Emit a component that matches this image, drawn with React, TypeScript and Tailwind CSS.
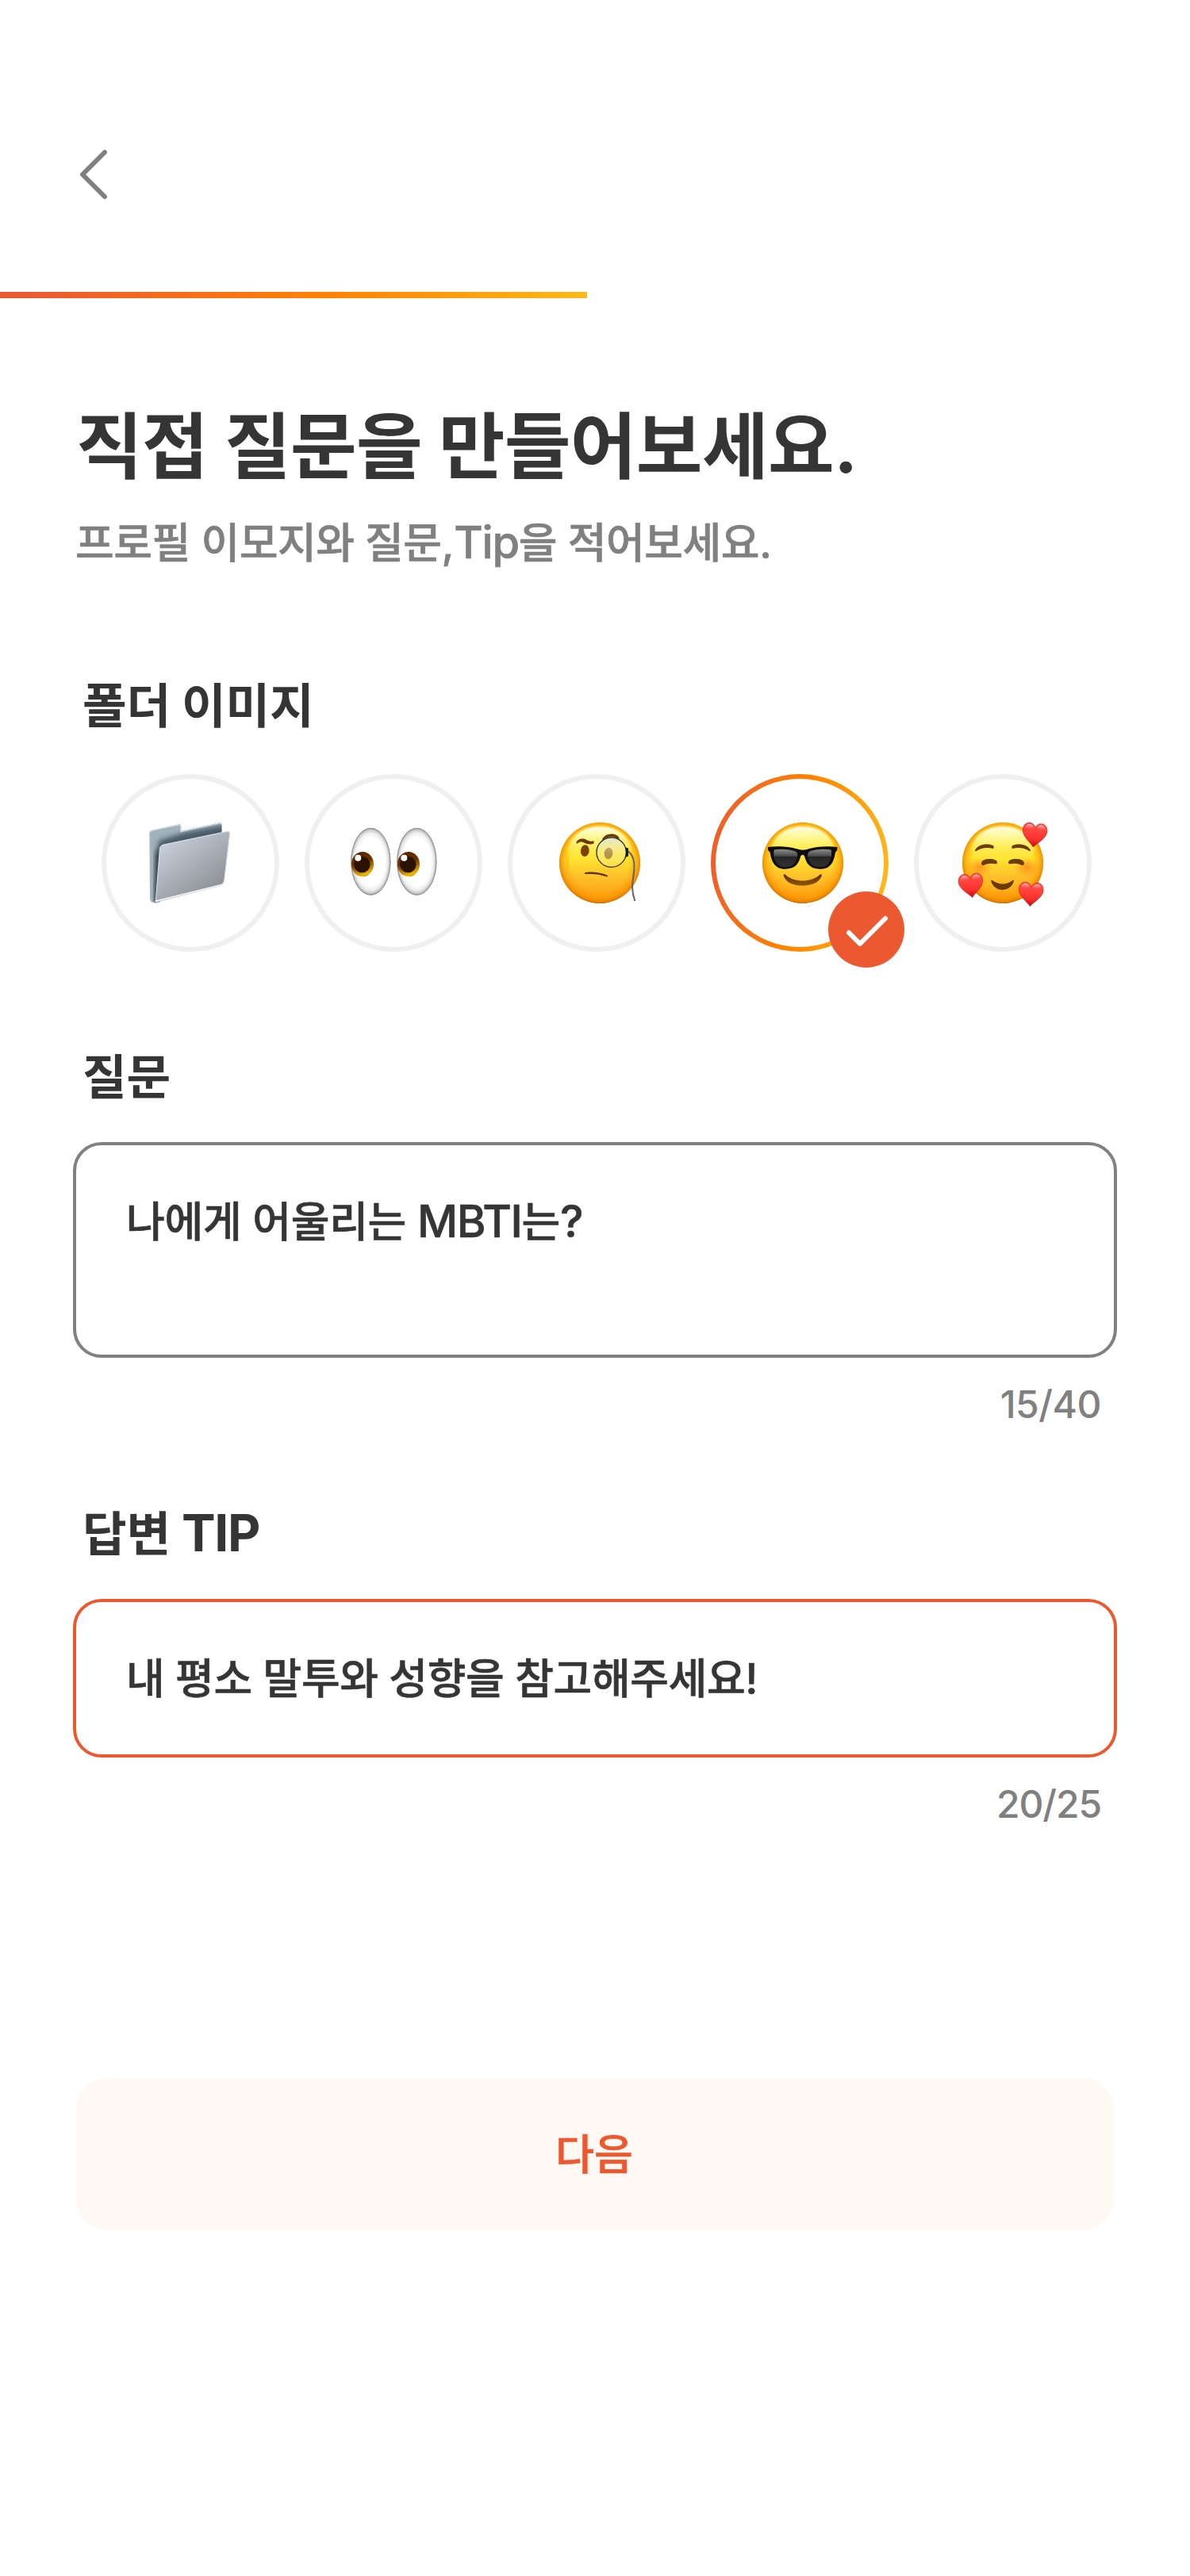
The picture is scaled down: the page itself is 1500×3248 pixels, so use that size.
import { useState, type ReactNode } from 'react';

function FolderArt() {
  return (
    <svg viewBox="84 78 672 672" className="size-full">
      <defs>
        <linearGradient id="folderFront" x1="0.05" y1="0.1" x2="0.75" y2="1">
          <stop offset="0" stopColor="#cdd5e1" />
          <stop offset="0.4" stopColor="#b0b6bf" />
          <stop offset="0.75" stopColor="#989da3" />
          <stop offset="1" stopColor="#838b91" />
        </linearGradient>
        <filter id="folderBlur" x="-30%" y="-30%" width="160%" height="160%">
          <feGaussianBlur stdDeviation="10" />
        </filter>
        <clipPath id="folderClip">
          <path d="M265 300Q265 292 275 290L377 268Q385 267 385 275V293L531 262Q539 261 539 269V400L300 563Q268 572 267 545Z" />
        </clipPath>
      </defs>
      <g clipPath="url(#folderClip)">
        <path d="M260 250H560V600H260Z" fill="#a3b1bb" />
        <path d="M300 330L400 298L560 268V420L300 600H288Z" fill="#4a5d6b" filter="url(#folderBlur)" />
        <path d="M290 380L308 345L300 560L286 566Z" fill="#16212b" filter="url(#folderBlur)" />
        <path d="M267 300V545Q268 572 300 565" fill="none" stroke="#a9bac6" strokeWidth="8" />
        <path d="M267 298Q267 292 275 290L377 269Q385 268 385 276V294L531 263Q539 262 539 269" fill="none" stroke="#c9dbe6" strokeWidth="7" />
      </g>
      <path d="M304 362Q305 348 319 345L560 294Q570 292 570 303L547 490Q546 498 537 500L288 564Z" fill="url(#folderFront)" />
      <path d="M289 560L304 362Q305 348 319 345L560 295Q569 293 569 303L547 489" fill="none" stroke="#dfe6ec" strokeWidth="3" />
      <path d="M290 559L537 497Q546 495 547 487" fill="none" stroke="#eef1f3" strokeWidth="6" strokeLinecap="round" />
    </svg>
  );
}

function Eye({ x }: { x: number }) {
  return (
    <g transform={`translate(${x} 0)`}>
      <ellipse cx="322" cy="409" rx="75" ry="127" fill="url(#eyeWhite)" />
      <ellipse cx="322" cy="409" rx="74" ry="126" fill="none" stroke="#8d8d8d" strokeWidth="2.5" />
      <ellipse cx="291" cy="419" rx="42" ry="47" fill="url(#eyeIris)" />
      <circle cx="289" cy="420" r="31" fill="#2a1300" />
      <circle cx="274" cy="395" r="12" fill="#fff" />
    </g>
  );
}

function EyesArt() {
  return (
    <svg viewBox="72 78 672 672" className="size-full">
      <defs>
        <radialGradient id="eyeWhite" cx="0.5" cy="0.5" r="0.5">
          <stop offset="0.72" stopColor="#ffffff" />
          <stop offset="0.86" stopColor="#ececec" />
          <stop offset="0.95" stopColor="#c4c4c4" />
          <stop offset="1" stopColor="#8f8f8f" />
        </radialGradient>
        <linearGradient id="eyeIris" x1="0.35" y1="0" x2="0.65" y2="1">
          <stop offset="0" stopColor="#5b2700" />
          <stop offset="0.4" stopColor="#6b3200" />
          <stop offset="0.75" stopColor="#c58800" />
          <stop offset="0.93" stopColor="#f2bd05" />
          <stop offset="1" stopColor="#9a5c00" />
        </linearGradient>
      </defs>
      <Eye x={0} />
      <Eye x={174} />
    </svg>
  );
}

function FaceBase({ id, cx }: { id: string; cx: number }) {
  return (
    <>
      <defs>
        <linearGradient id={`${id}-base`} x1="0" y1="0" x2="0" y2="1">
          <stop offset="0" stopColor="#ffdc1e" />
          <stop offset="0.45" stopColor="#ffe22e" />
          <stop offset="0.68" stopColor="#fec02a" />
          <stop offset="0.9" stopColor="#fda414" />
          <stop offset="1" stopColor="#f59a12" />
        </linearGradient>
        <radialGradient id={`${id}-edge`} cx="0.5" cy="0.48" r="0.52">
          <stop offset="0.7" stopColor="#ff9a00" stopOpacity="0" />
          <stop offset="0.87" stopColor="#fb9500" stopOpacity="0.55" />
          <stop offset="0.96" stopColor="#e98300" stopOpacity="0.9" />
          <stop offset="1" stopColor="#c96800" />
        </radialGradient>
        <linearGradient id={`${id}-glow`} x1="0" y1="0" x2="0" y2="1">
          <stop offset="0" stopColor="#fffde6" />
          <stop offset="0.3" stopColor="#fffa9e" stopOpacity="0.9" />
          <stop offset="1" stopColor="#ffee3c" stopOpacity="0" />
        </linearGradient>
        <filter id={`${id}-soft`}>
          <feGaussianBlur stdDeviation="3" />
        </filter>
      </defs>
      <circle cx={cx} cy="414" r="153" fill={`url(#${id}-base)`} />
      <circle cx={cx} cy="414" r="153" fill={`url(#${id}-edge)`} />
      <path
        d={`M${cx} 276C${cx + 60} 276 ${cx + 106} 305 ${cx + 122} 362C${cx + 116} 400 ${cx + 60} 420 ${cx} 420C${cx - 60} 420 ${cx - 116} 400 ${cx - 122} 362C${cx - 106} 305 ${cx - 60} 276 ${cx} 276Z`}
        fill={`url(#${id}-glow)`}
        filter={`url(#${id}-soft)`}
      />
    </>
  );
}

function MonocleArt() {
  return (
    <svg viewBox="60 78 672 672" className="size-full">
      <defs>
        <linearGradient id="monocleLens" x1="0" y1="0" x2="0" y2="1">
          <stop offset="0" stopColor="#dfe3d6" stopOpacity="0.85" />
          <stop offset="0.5" stopColor="#f3eda6" stopOpacity="0.5" />
          <stop offset="1" stopColor="#ffe96a" stopOpacity="0.4" />
        </linearGradient>
      </defs>
      <FaceBase id="monocle" cx={408} />
      <path d="M319 337C324 322 345 319 358 327C368 333 377 333 386 331L385 341C373 345 360 343 350 338C340 333 330 334 325 340Q318 342 319 337Z" fill="#6b3a00" />
      <path d="M417 325C425 302 470 296 482 320L478 326C465 310 440 315 428 322Q418 328 417 325Z" fill="#6b3a00" />
      <ellipse cx="352" cy="368" rx="16" ry="22" fill="#7a4300" transform="rotate(6 352 368)" />
      <ellipse cx="441" cy="378" rx="16" ry="22" fill="#7a4300" transform="rotate(6 441 378)" />
      <path d="M351 451C375 445 415 450 438 462Q438 468 432 466C410 457 378 454 355 457Q350 456 351 451Z" fill="#5e3100" />
      <circle cx="452" cy="374" r="56" fill="url(#monocleLens)" stroke="#283038" strokeWidth="4" />
      <path d="M515 370C530 380 540 405 538 440C536 475 522 505 541 558" fill="none" stroke="#5f6368" strokeWidth="6" />
      <path d="M506 357L515 359V388L507 391Q511 374 506 357Z" fill="#101418" stroke="#101418" strokeWidth="2" />
    </svg>
  );
}

function SunglassesArt() {
  return (
    <svg viewBox="48 78 672 672" className="size-full">
      <defs>
        <linearGradient id="shadeLens" x1="0" y1="0" x2="0" y2="1">
          <stop offset="0" stopColor="#8c8c8c" />
          <stop offset="0.38" stopColor="#4a4a4a" />
          <stop offset="0.42" stopColor="#262626" />
          <stop offset="1" stopColor="#303030" />
        </linearGradient>
        <linearGradient id="shadeMouth" x1="0" y1="0" x2="0" y2="1">
          <stop offset="0" stopColor="#5e2f00" />
          <stop offset="1" stopColor="#8f5600" />
        </linearGradient>
      </defs>
      <FaceBase id="shade" cx={396} />
      <path d="M264 354C300 349 345 352 373 361Q395 369 418 361C446 352 490 349 526 354V365L519 374C514 410 500 437 464 437C425 437 410 420 402 388Q395 378 388 388C380 420 366 437 328 437C291 437 277 410 272 374L264 365Z" fill="#0e0e0e" />
      <path d="M289 364C318 360 352 364 369 371C381 378 375 397 368 411C358 427 343 430 325 430C298 428 284 402 286 374Q286 367 289 364Z" fill="url(#shadeLens)" />
      <path d="M501 364C472 360 438 364 421 371C409 378 415 397 422 411C432 427 447 430 465 430C492 428 506 402 504 374Q504 367 501 364Z" fill="url(#shadeLens)" />
      <path d="M322 458Q326 454 331 460C365 489 425 489 459 460Q466 453 468 460C462 487 430 500 395 500C360 500 328 487 322 458Z" fill="url(#shadeMouth)" />
    </svg>
  );
}

function Heart({ x, y, r }: { x: number; y: number; r: number }) {
  return (
    <g transform={`translate(${x} ${y}) rotate(${r})`}>
      <path d="M0 46C-12 30 -46 10 -46 -17C-46 -34 -35 -44 -23 -44C-11 -44 -3 -36 0 -27C3 -36 11 -44 23 -44C35 -44 46 -34 46 -17C46 10 12 30 0 46Z" fill="url(#heartRed)" stroke="#d5191c" strokeWidth="2" />
      <path d="M-39 -20C-38 -34 -29 -39 -22 -39C-13 -39 -7 -33 -5 -25C-14 -19 -28 -19 -39 -20Z" fill="url(#heartShine)" />
      <path d="M39 -20C38 -34 29 -39 22 -39C13 -39 7 -33 5 -25C14 -19 28 -19 39 -20Z" fill="url(#heartShine)" />
    </g>
  );
}

function HeartsArt() {
  return (
    <svg viewBox="36 78 672 672" className="size-full">
      <defs>
        <linearGradient id="heartRed" x1="0" y1="0" x2="0" y2="1">
          <stop offset="0" stopColor="#f8544f" />
          <stop offset="0.45" stopColor="#ff3d36" />
          <stop offset="0.7" stopColor="#f52f2c" />
          <stop offset="1" stopColor="#b80d12" />
        </linearGradient>
        <linearGradient id="heartShine" x1="0" y1="0" x2="0" y2="1">
          <stop offset="0" stopColor="#ffc9c5" stopOpacity="0.95" />
          <stop offset="1" stopColor="#ff6a63" stopOpacity="0" />
        </linearGradient>
        <radialGradient id="blush">
          <stop offset="0" stopColor="#ff7a1a" stopOpacity="0.7" />
          <stop offset="1" stopColor="#ff8a1a" stopOpacity="0" />
        </radialGradient>
      </defs>
      <FaceBase id="love" cx={372} />
      <ellipse cx="284" cy="432" rx="50" ry="40" fill="url(#blush)" />
      <ellipse cx="462" cy="432" rx="50" ry="40" fill="url(#blush)" />
      <path d="M267 367C275 345 315 338 336 349Q341 357 335 360C315 354 290 357 272 369Q267 371 267 367Z" fill="#6b3c00" />
      <path d="M477 367C469 345 429 338 408 349Q403 357 409 360C429 354 454 357 472 369Q477 371 477 367Z" fill="#6b3c00" />
      <path d="M291 418C290 404 305 399 322 399C340 399 351 404 351 413Q350 420 343 418C330 414 312 416 300 423Q292 425 291 418Z" fill="#6b3c00" />
      <path d="M453 418C454 404 439 399 422 399C404 399 393 404 393 413Q394 420 401 418C414 414 432 416 444 423Q452 425 453 418Z" fill="#6b3c00" />
      <path d="M327 480Q331 477 337 483C357 497 385 497 405 483Q411 477 414 481C410 503 392 516 371 516C350 516 332 503 327 480Z" fill="#6b3a00" />
      <Heart x={492} y={308} r={6} />
      <Heart x={252} y={499} r={-6} />
      <Heart x={478} y={532} r={4} />
    </svg>
  );
}

const emojis = [
  { id: 'folder', art: <FolderArt /> },
  { id: 'eyes', art: <EyesArt /> },
  { id: 'monocle', art: <MonocleArt /> },
  { id: 'cool', art: <SunglassesArt /> },
  { id: 'love', art: <HeartsArt /> },
];

function Latin({ children }: { children: ReactNode }) {
  return <span className="text-[1.057em] leading-none tracking-[-0.022em]">{children}</span>;
}

function Label({ children }: { children: ReactNode }) {
  return <h2 className="ml-2 text-[60.5px] leading-[76px] font-bold tracking-[-0.2px]">{children}</h2>;
}

export default function App() {
  const [selected, setSelected] = useState('cool');
  return (
    <main className="min-h-[3248px] w-[1500px] bg-white font-['Inter','Noto_Sans_CJK_KR',sans-serif] text-[#353535]">
      <header className="flex h-[368px] items-start pt-[188px] pl-[100px]">
        <button aria-label="뒤로" className="h-16 w-9 text-[#808080]">
          <svg viewBox="0 0 36 64" className="size-full" fill="none" stroke="currentColor" strokeWidth="6" strokeLinecap="round" strokeLinejoin="round">
            <path d="M32 4L4 32L32 60" />
          </svg>
        </button>
      </header>
      <div className="h-2 w-[740px] bg-[linear-gradient(105deg,#ec5931_5%,#ff8400_58%,#fbb91c_100%)]" />

      <div className="px-24">
        <h1 className="mt-[131px] text-[91px] leading-[112px] font-bold tracking-[-0.7px]">직접 질문을 만들어보세요.</h1>
        <p className="-ml-px mt-[30px] text-[53px] leading-[72px] font-medium tracking-[-0.5px] text-[#808080] [-webkit-text-stroke:0.6px_currentColor]">
          프로필 이모지와 질문,<Latin>Tip</Latin>을 적어보세요.
        </p>

        <section className="mt-[131px]">
          <Label>폴더 이미지</Label>
          <div className="mt-12 flex gap-8 pl-8">
            {emojis.map((e) => (
              <button key={e.id} onClick={() => setSelected(e.id)} className="relative size-56 shrink-0">
                {selected === e.id ? (
                  <span className="absolute inset-0 rounded-full bg-[linear-gradient(100deg,#ec5931_0%,#ff8400_50%,#fbc021_100%)] p-1.5">
                    <span className="block size-full rounded-full bg-white" />
                  </span>
                ) : (
                  <span className="absolute inset-0 rounded-full border-6 border-[#efefef]" />
                )}
                <span className="relative block size-full">{e.art}</span>
                {selected === e.id && (
                  <span className="absolute -right-5 -bottom-5 size-24 rounded-full bg-[#ec5931]">
                    <svg viewBox="0 0 96 96" fill="none" stroke="#fff" strokeWidth="6" strokeLinecap="round" strokeLinejoin="round">
                      <path d="M26 52L40 66L72 34" />
                    </svg>
                  </span>
                )}
              </button>
            ))}
          </div>
        </section>

        <section className="mt-[120px]">
          <Label>질문</Label>
          <div className="-mx-1 mt-11 h-[272px] rounded-[36px] border-4 border-[#808080] px-[63px] pt-[61px]">
            <p className="text-[53px] leading-[72px] font-medium tracking-[-0.3px] [-webkit-text-stroke:0.6px_currentColor]">
              나에게 어울리는 <Latin>MBTI</Latin>는<Latin>?</Latin>
            </p>
          </div>
          <p className="mt-[29px] mr-4 text-right text-[48px] leading-[60px] font-medium tracking-[-0.5px] text-[#808080]">15/40</p>
        </section>

        <section className="mt-[95px]">
          <Label>
            답변 <Latin>TIP</Latin>
          </Label>
          <div className="-mx-1 mt-11 h-[200px] rounded-[36px] border-4 border-[#ec5931] px-[63px] pt-[61px]">
            <p className="text-[53px] leading-[72px] font-medium tracking-[-0.4px] [-webkit-text-stroke:0.6px_currentColor]">
              내 평소 말투와 성향을 참고해주세요!
            </p>
          </div>
          <p className="mt-[29px] mr-4 text-right text-[48px] leading-[60px] font-medium tracking-[-1.1px] text-[#808080]">20/25</p>
        </section>

        <button className="mt-[315px] flex h-48 w-full items-center justify-center rounded-[40px] bg-[#fff8f3] pt-0.5 pr-0.5 text-[53px] leading-[72px] font-medium text-[#ec5931] [-webkit-text-stroke:0.6px_currentColor]">
          다음
        </button>
      </div>
    </main>
  );
}
